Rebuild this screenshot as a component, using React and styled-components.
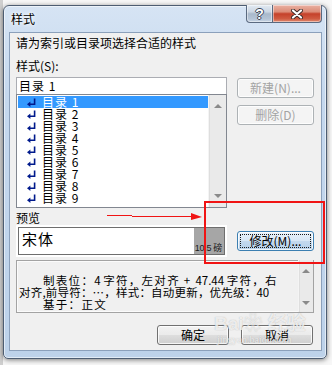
import React from 'react';
import styled, { createGlobalStyle } from 'styled-components';

const FONT = `"Noto Sans CJK SC", "Liberation Sans", sans-serif`;

const Global = createGlobalStyle`
  html, body { margin: 0; padding: 0; background: #f4f4f4; }
  body { font-family: ${FONT}; }
  * { box-sizing: border-box; }
`;

const Page = styled.div`
  position: relative;
  width: 332px;
  height: 365px;
  overflow: hidden;
  padding: 5px 0 0 3px;
  background: linear-gradient(90deg, #cfcfcf 0, #cfcfcf 3px, #f7f7f7 3px);
  font-family: ${FONT};
  color: #000;
`;

const Window = styled.div`
  width: 324px;
  height: 354px;
  border: 1px solid #4d5d72;
  border-radius: 6px 6px 5px 5px;
  background: linear-gradient(180deg, #d6e4f4 0%, #c5d8ee 25%, #bdd2ea 100%);
  box-shadow: 0 1px 5px rgba(0, 0, 0, 0.5), inset 0 0 0 1px rgba(255, 255, 255, 0.55);
  padding: 0 4px 7px 5px;
  display: flex;
  flex-direction: column;
`;

const TitleBar = styled.div`
  height: 26px;
  display: flex;
  align-items: flex-start;
  justify-content: space-between;
`;

const Title = styled.div`
  font-size: 12px;
  line-height: 14px;
  margin: 6px 0 0 2px;
  text-shadow: 0 0 5px #fff, 0 0 3px #fff;
`;

const Caption = styled.div`
  display: flex;
  margin-top: -1px;
`;

const CapButton = styled.div`
  height: 18px;
  width: ${(p) => p.$w}px;
  display: flex;
  align-items: center;
  justify-content: center;
  border: 1px solid #5a6a80;
  border-top: none;
  border-left: ${(p) => (p.$close ? 'none' : '1px solid #5a6a80')};
  border-radius: ${(p) => (p.$close ? '0 0 4px 0' : '0 0 0 4px')};
  background: ${(p) =>
    p.$close
      ? 'linear-gradient(180deg, #eab1a3 0%, #dc8d78 40%, #c5412a 52%, #cf5a40 80%, #e08a70 100%)'
      : 'linear-gradient(180deg, #e3eaf2 0%, #cbd6e3 40%, #a9b9cb 52%, #b3c3d5 80%, #c5d3e2 100%)'};
  box-shadow: inset 0 0 0 1px rgba(255, 255, 255, 0.45);
`;

const HelpGlyph = styled.span`
  font-family: "Liberation Sans", sans-serif;
  font-weight: bold;
  font-size: 14px;
  line-height: 14px;
  color: #fff;
  text-shadow: 1px 0 0 #3b4656, -1px 0 0 #3b4656, 0 1px 0 #3b4656, 0 -1px 0 #3b4656;
`;

const Client = styled.div`
  flex: 1;
  border: 1px solid #8ba0bb;
  background: #f0f0f0;
  padding: 3px 7px 0 6px;
  display: flex;
  flex-direction: column;
`;

const Text = styled.div`
  font-size: 12px;
  line-height: 14px;
  margin-top: ${(p) => p.$mt || 0}px;
  white-space: nowrap;
`;

const MainRow = styled.div`
  display: flex;
  gap: 10px;
  margin-top: ${(p) => p.$mt || 0}px;
  align-items: flex-start;
`;

const LeftCol = styled.div`
  width: 211px;
  display: flex;
  flex-direction: column;
`;

const RightCol = styled.div`
  width: 77px;
  display: flex;
  flex-direction: column;
  gap: 7px;
  padding-top: ${(p) => p.$pt || 0}px;
`;

const Input = styled.div`
  height: 18px;
  border: 1px solid #abadb3;
  border-bottom-color: #e3e9ef;
  background: #fff;
  font-size: 12px;
  line-height: 16px;
  padding-left: 2px;
  letter-spacing: 1px;
  white-space: pre;
`;

const List = styled.div`
  margin-top: -1px;
  height: 114px;
  border: 1px solid #828790;
  background: #fff;
  display: flex;
  padding: 1px 0 0 1px;
`;

const Rows = styled.div`
  flex: 1;
  display: flex;
  flex-direction: column;
`;

const Row = styled.div`
  height: 12px;
  display: flex;
  align-items: center;
  gap: 6px;
  padding-left: 9px;
  background: ${(p) => (p.$sel ? '#3399ff' : 'transparent')};
  color: ${(p) => (p.$sel ? '#fff' : '#000')};
  font-size: 12px;
  line-height: 12px;
  letter-spacing: 1px;
  white-space: pre;
`;

const Scroll = styled.div`
  width: ${(p) => p.$w}px;
  margin: -1px 0 0 0;
  background: #eaeaea;
  border-left: 1px solid #f4f4f4;
  display: flex;
  flex-direction: column;
  justify-content: space-between;
  align-items: center;
  padding: ${(p) => p.$pad};
  box-shadow: inset 1px 0 0 #dedede;
`;

const Arrow = styled.div`
  width: 0;
  height: 0;
  border-left: 4px solid transparent;
  border-right: 4px solid transparent;
  ${(p) =>
    p.$down ? 'border-top: 4px solid #8a8a8a;' : 'border-bottom: 4px solid #8a8a8a;'}
`;

const Button = styled.div`
  width: ${(p) => p.$w || 77}px;
  height: 20px;
  display: flex;
  align-items: center;
  justify-content: center;
  font-size: 12px;
  line-height: 14px;
  white-space: pre;
  border-radius: 3px;
  border: 1px solid ${(p) => (p.$disabled ? '#adb2b5' : p.$default ? '#3c7fb1' : '#707070')};
  color: ${(p) => (p.$disabled ? '#a3a3a3' : '#000')};
  background: ${(p) =>
    p.$disabled
      ? '#f4f4f4'
      : p.$default
      ? 'linear-gradient(180deg, #e9f2fb 0%, #d8e7f5 48%, #c3d9ee 52%, #b5d0ea 100%)'
      : 'linear-gradient(180deg, #f2f2f2 0%, #ebebeb 48%, #dddddd 52%, #cfcfcf 100%)'};
  box-shadow: inset 0 0 0 1px rgba(255, 255, 255, 0.8);
  position: relative;
  margin-top: ${(p) => p.$mt || 0}px;
`;

const Focus = styled.div`
  position: absolute;
  inset: 2px;
  border: 1px dotted #1a1a1a;
  pointer-events: none;
`;

const PreviewRow = styled.div`
  display: flex;
  gap: 10px;
  align-items: flex-start;
`;

const PreviewFrame = styled.div`
  width: 211px;
  height: 32px;
  background: #fff;
  padding: 2px;
`;

const PreviewInner = styled.div`
  height: 28px;
  border: 1px solid #6e6e6e;
  display: flex;
`;

const Sample = styled.div`
  flex: 1;
  background: #fff;
  font-size: 15px;
  line-height: 18px;
  padding: 2px 0 0 3px;
  letter-spacing: 1px;
`;

const SizeTag = styled.div`
  width: 30px;
  background: #a6a6a6;
  display: flex;
  align-items: flex-end;
  justify-content: flex-end;
  font-family: "Liberation Sans", "Noto Sans CJK SC", sans-serif;
  font-size: 9px;
  line-height: 11px;
  letter-spacing: -0.3px;
  padding: 0 2px 0 0;
  color: #1a1a1a;
  white-space: pre;
`;

const Desc = styled.div`
  margin-top: 3px;
  height: 53px;
  border: 1px solid #a3a3a3;
  box-shadow: inset 0 0 0 1px #fbfbfb;
  display: flex;
`;

const DescText = styled.div`
  flex: 1;
  padding: 13px 0 0 2px;
  font-size: 11.5px;
  line-height: 12px;
  white-space: pre;
`;

const DescLine = styled.div`
  padding-left: ${(p) => p.$indent || 0}px;
  letter-spacing: ${(p) => (p.$tight ? '0.2px' : '1.3px')};
`;

const Tight = styled.span`
  letter-spacing: 0;
`;

const BottomRow = styled.div`
  margin-top: 12px;
  display: flex;
  justify-content: flex-end;
  gap: 12px;
  padding-right: 1px;
`;

const RedBox = styled.div`
  position: absolute;
  left: 204px;
  top: 201px;
  width: 121px;
  height: 63px;
  border: 2px solid #f01414;
  pointer-events: none;
`;

const RedArrow = styled.svg`
  position: absolute;
  left: 105px;
  top: 210px;
  pointer-events: none;
`;

const Watermark = styled.div`
  position: absolute;
  left: 214px;
  top: 313px;
  display: flex;
  flex-direction: column;
  align-items: flex-start;
  color: rgba(255, 255, 255, 0.75);
  text-shadow: 0 0 1px rgba(120, 120, 120, 0.55);
  pointer-events: none;
`;

const WmMain = styled.div`
  font-family: "Liberation Sans", "Noto Sans CJK SC", sans-serif;
  font-size: 19px;
  line-height: 22px;
  font-weight: bold;
  white-space: pre;
`;

const WmSub = styled.div`
  font-family: "Liberation Serif", serif;
  font-size: 10px;
  line-height: 10px;
  margin-left: 3px;
`;

const ReturnMark = () => (
  <svg width="9" height="9" viewBox="0 0 9 9" style={{ flex: 'none' }}>
    <path d="M7.6 0.5 V6.3 H2.4" fill="none" stroke="#001a8c" strokeWidth="1.6" />
    <polygon points="0,6.3 3.4,3.6 3.4,9" fill="#001a8c" />
  </svg>
);

const CloseX = () => (
  <svg width="12" height="10" viewBox="0 0 12 10">
    <path d="M2 1.5 L10 8.5 M10 1.5 L2 8.5" stroke="#3a2a28" strokeWidth="4" strokeLinecap="round" />
    <path d="M2 1.5 L10 8.5 M10 1.5 L2 8.5" stroke="#fff" strokeWidth="2.2" strokeLinecap="round" />
  </svg>
);

const items = [1, 2, 3, 4, 5, 6, 7, 8, 9];

export default function App() {
  return (
    <>
      <Global />
      <Page>
        <Window>
          <TitleBar>
            <Title>样式</Title>
            <Caption>
              <CapButton $w={27}>
                <HelpGlyph>?</HelpGlyph>
              </CapButton>
              <CapButton $w={49} $close>
                <CloseX />
              </CapButton>
            </Caption>
          </TitleBar>
          <Client>
            <Text>请为索引或目录项选择合适的样式</Text>
            <Text $mt={9}>样式(S):</Text>
            <MainRow $mt={4}>
              <LeftCol>
                <Input>目录 1</Input>
                <List>
                  <Rows>
                    {items.map((n) => (
                      <Row key={n} $sel={n === 1}>
                        <ReturnMark />
                        <span>{`目录 ${n}`}</span>
                      </Row>
                    ))}
                  </Rows>
                  <Scroll $w={18} $pad="9px 0 9px 0">
                    <Arrow />
                    <Arrow $down />
                  </Scroll>
                </List>
              </LeftCol>
              <RightCol $pt={1}>
                <Button $disabled>新建(N)...</Button>
                <Button $disabled>删除(D)</Button>
              </RightCol>
            </MainRow>
            <Text $mt={3}>预览</Text>
            <PreviewRow>
              <PreviewFrame>
                <PreviewInner>
                  <Sample>宋体</Sample>
                  <SizeTag>10.5 磅</SizeTag>
                </PreviewInner>
              </PreviewFrame>
              <Button $default $mt={6}>
                修改(M)...
                <Focus />
              </Button>
            </PreviewRow>
            <Desc>
              <DescText>
                <DescLine $indent={24}>
                  制表位：<Tight>4 </Tight>字符，左对齐 <Tight>+  47.44 </Tight>字符，右
                </DescLine>
                <DescLine $tight>
                  对齐,前导符：…，样式：自动更新，优先级：<Tight>40</Tight>
                </DescLine>
                <DescLine $indent={24}>基于：正文</DescLine>
              </DescText>
              <Scroll $w={15} $pad="9px 0 7px 0">
                <Arrow />
                <Arrow $down />
              </Scroll>
            </Desc>
            <BottomRow>
              <Button $w={72}>确定</Button>
              <Button $w={72}>取消</Button>
            </BottomRow>
          </Client>
        </Window>
        <RedBox />
        <RedArrow width="100" height="14" viewBox="0 0 100 14">
          <path d="M2 5.5 H27 M27 6.5 H88" stroke="#f01414" strokeWidth="1" />
          <polygon points="86,3 97,7 86,10" fill="#f01414" />
        </RedArrow>
        <Watermark>
          <WmMain>Bai❀ 经验</WmMain>
          <WmSub>jingyan.baidu.com</WmSub>
        </Watermark>
      </Page>
    </>
  );
}
